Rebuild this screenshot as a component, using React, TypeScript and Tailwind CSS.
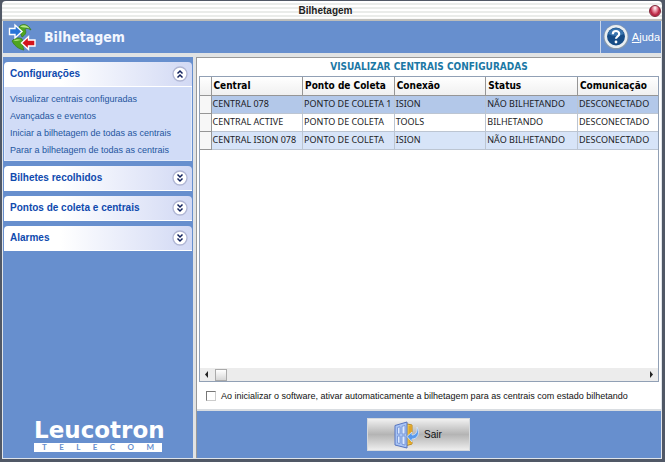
import { useState } from "react"

const TAHOMA = "font-['DejaVu_Sans_Condensed','DejaVu_Sans',sans-serif]"
const SANS = "font-['Liberation_Sans',sans-serif]"

const COLUMNS = ["Central", "Ponto de Coleta", "Conexão", "Status", "Comunicação"]

const ROWS = [
  ["CENTRAL 078", "PONTO DE COLETA 1", "ISION", "NÃO BILHETANDO", "DESCONECTADO"],
  ["CENTRAL ACTIVE", "PONTO DE COLETA", "TOOLS", "BILHETANDO", "DESCONECTADO"],
  ["CENTRAL ISION 078", "PONTO DE COLETA", "ISION", "NÃO BILHETANDO", "DESCONECTADO"],
]

const ROW_COLORS = ["bg-[#b3c8e9]", "bg-white", "bg-[#d7e4f8]"]

const GROUPS = [
  {
    title: "Configurações",
    links: [
      "Visualizar centrais configuradas",
      "Avançadas e eventos",
      "Iniciar a bilhetagem de todas as centrais",
      "Parar a bilhetagem de todas as centrais",
    ],
  },
  { title: "Bilhetes recolhidos", links: [] },
  { title: "Pontos de coleta e centrais", links: [] },
  { title: "Alarmes", links: [] },
]

function BilhetagemIcon() {
  return (
    <svg width="28" height="28" viewBox="0 0 28 28" aria-hidden="true">
      <path d="M11 4 C14 0 20 1 23 7 C20 5 18 5 17 6 C19 10 17 12 14 14 L12 9Z" fill="#4fa51f" stroke="#3a7d1c" strokeWidth=".8" />
      <path d="M12 3.500 C16 1 20 3 21.500 5.500 C18 4 15 5 12 3.500Z" fill="#b7e68a" />
      <path d="M4 18 C6 15 11 14 14 16 C16 19 14 24 16 27 C10 26 6 22 4 18Z" fill="#4fa51f" stroke="#3a7d1c" strokeWidth=".8" />
      <path d="M5.500 18 C8 16 11 16 13 17 C10 18 8 18 5.500 18Z" fill="#a3d873" />
      <path d="M1.500 5.500 H7 V2 L14 8.500 L7 15 V11.500 H1.500 V5.500Z" fill="#2774d8" stroke="#fff" strokeWidth="1.400" />
      <path d="M27 17 H20.500 V13.500 L13.500 20 L20.500 26.500 V23 H27Z" fill="#d3141c" stroke="#fff" strokeWidth="1.400" />
    </svg>
  )
}

function HelpIcon() {
  return (
    <svg width="26" height="26" viewBox="0 0 26 26" aria-hidden="true">
      <circle cx="13" cy="13" r="12.500" fill="#8698ac" />
      <circle cx="13" cy="12.500" r="11.500" fill="#e9eef2" />
      <circle cx="13" cy="12.500" r="9" fill="#174c86" />
      <path d="M5 10 A8.500 8.500 0 0 1 21 10 Q13 14 5 10Z" fill="#3974ae" />
      <path d="M9.800 10.200 C9.800 6 16.200 6 16.200 10 C16.200 12.300 13 12.300 13 14.800" fill="none" stroke="#fff" strokeWidth="2.200" />
      <circle cx="13" cy="18" r="1.400" fill="#fff" />
    </svg>
  )
}

function Chevron({ open }: { open: boolean }) {
  return (
    <svg width="16" height="16" viewBox="0 0 16 16" aria-hidden="true">
      <circle cx="8" cy="8" r="7" fill="#fff" stroke="#b0b6d4" strokeWidth="1.300" />
      <path
        d={open ? "M5.500 7.500 L8 5 L10.500 7.500 M5.500 11.500 L8 9 L10.500 11.500" : "M5.500 4.500 L8 7 L10.500 4.500 M5.500 8.500 L8 11 L10.500 8.500"}
        fill="none"
        stroke="#13235e"
        strokeWidth="1.500"
      />
    </svg>
  )
}

function DoorIcon() {
  return (
    <svg width="26" height="28" viewBox="0 0 26 28" aria-hidden="true">
      <path d="M11 2.500 L18 4 V23 L11 25Z" fill="#f6cc4a" stroke="#b98a22" />
      <path d="M14.500 5 L18 4 V23 L14.500 22Z" fill="#dfa52c" />
      <path d="M1 4.500 L13 1 V27 L1 24Z" fill="#a8c4f4" stroke="#5674c0" />
      <path d="M3.500 6.500 L6 5.800 V13 H3.500Z M8 5.300 L11 4.500 V13 H8Z M3.500 15 H6 V22.500 L3.500 22Z M8 15 H11 V24 L8 23.200Z" fill="#dceaff" stroke="#6b8ad0" strokeWidth=".8" />
      <path d="M23 6 C26.500 12 23.500 18 18 18 V21 L13 15.500 L18 11 V14 C22 14 23.500 11 23 6Z" fill="#5799ec" stroke="#d8eaff" strokeWidth=".8" />
    </svg>
  )
}

function TitleBar() {
  return (
    <div className="flex h-5 shrink-0 items-center rounded-t bg-[repeating-linear-gradient(to_bottom,#ffffff_0px,#ffffff_2px,#eaecea_2px,#eaecea_4px)] pr-px pb-px shadow-[inset_0_-2px_1px_#bdbdb9]">
      <h1 className={`${SANS} flex-1 text-center text-[10px] leading-4 font-bold text-[#222]`}>Bilhetagem</h1>
      <button
        aria-label="Fechar"
        className="size-3 rounded-full border border-[#80283a] bg-[radial-gradient(ellipse_at_50%_20%,#ffffff_0%,#e58295_35%,#b51d3c_65%,#ee9aa8_100%)]"
      />
    </div>
  )
}

function Header() {
  return (
    <header className="flex h-8 shrink-0 bg-[#678fce] text-white">
      <div className="flex flex-1 items-center gap-2 pl-[5px]">
        <BilhetagemIcon />
        <h2 className={`${TAHOMA} text-[14px] leading-5 font-bold text-[#f3f7ff]`}>Bilhetagem</h2>
      </div>
      <a
        href="#ajuda"
        className={`${SANS} flex items-center gap-[3px] border-l border-[#c9d6ec] pr-px pl-[2px] text-[11px] leading-4`}
      >
        <HelpIcon />
        <span>
          <u>A</u>juda
        </span>
      </a>
    </header>
  )
}

function Logo() {
  return (
    <div className="mt-auto mb-[6px] ml-[30px] flex w-32 flex-col gap-px self-start text-white">
      <div className="text-center font-['DejaVu_Sans',sans-serif] text-[23px] leading-6 font-bold">Leucotron</div>
      <div className="flex h-[9px] items-center justify-between bg-white px-2 font-['Lato',sans-serif] text-[8px] leading-[9px] font-bold text-[#678fce]">
        {"TELECOM".split("").map((letter, i) => (
          <span key={i}>{letter}</span>
        ))}
      </div>
    </div>
  )
}

function Sidebar() {
  const [open, setOpen] = useState("Configurações")

  return (
    <nav className={`${SANS} flex w-[190px] shrink-0 flex-col gap-[5px] bg-[#678fce] px-px pt-[5px]`}>
      {GROUPS.map((group) => {
        const isOpen = open === group.title && group.links.length > 0

        return (
          <section key={group.title}>
            <button
              onClick={() => setOpen(isOpen ? "" : group.title)}
              aria-expanded={isOpen}
              className="flex h-[25px] w-full items-center justify-between rounded-t border-b border-white bg-linear-to-r from-white from-30% to-[#d2d9f4] pr-1 pl-[6px] text-left text-[10px] leading-4 font-bold text-[#0f4aae]"
            >
              {group.title}
              <Chevron open={isOpen} />
            </button>
            {isOpen && (
              <ul className="border border-t-0 border-[#e4ebfa] bg-[#d1dcf7] pt-1 pb-px pl-[5px] text-[9px]">
                {group.links.map((link) => (
                  <li key={link} className="h-[17px] leading-[17px] whitespace-nowrap text-[#24569f]">
                    <a href="#centrais">{link}</a>
                  </li>
                ))}
              </ul>
            )}
          </section>
        )
      })}
      <Logo />
    </nav>
  )
}

function CentralsTable() {
  return (
    <div className="flex min-h-0 flex-1 flex-col border border-[#91a0b5] bg-white">
      <table className="w-full table-fixed border-collapse text-[#1c1c26]">
        <colgroup>
          <col className="w-[11px]" />
          <col className="w-[20%]" />
          <col className="w-[20%]" />
          <col className="w-[20%]" />
          <col className="w-[20%]" />
          <col />
        </colgroup>
        <thead className={`${TAHOMA} text-[10px]`}>
          <tr className="h-[18px] bg-linear-to-b from-white to-[#f0f0f0] text-black">
            <th className="border-r border-b border-[#969696]" />
            {COLUMNS.map((column) => (
              <th
                key={column}
                className="border-r border-b border-[#969696] px-[2px] py-0 text-left leading-4 font-bold whitespace-nowrap last:border-r-0"
              >
                {column}
              </th>
            ))}
          </tr>
        </thead>
        <tbody className="font-['Noto_Sans',sans-serif] text-[9px]">
          {ROWS.map((row, i) => (
            <tr key={row[0]} className={`h-[18px] ${ROW_COLORS[i]}`}>
              <td className="border-r border-b border-[#969696] bg-[#f7f7f7]" />
              {row.map((cell, j) => (
                <td
                  key={j}
                  className="border-r border-b border-[#bcc5d2] px-px py-0 leading-4 whitespace-nowrap last:border-r-0"
                >
                  {cell}
                </td>
              ))}
            </tr>
          ))}
        </tbody>
      </table>
      <div className="mt-auto flex h-[13px] items-center bg-[#ececec] px-1">
        <svg width="5" height="7" viewBox="0 0 5 7" aria-hidden="true">
          <path d="M4 0 L1 3.500 L4 7Z" fill="#222" />
        </svg>
        <div className="ml-[6px] h-3 w-3 border border-[#aaa] bg-linear-to-b from-white to-[#d7d7d7]" />
        <svg className="ml-auto" width="5" height="7" viewBox="0 0 5 7" aria-hidden="true">
          <path d="M1 0 L4 3.500 L1 7Z" fill="#222" />
        </svg>
      </div>
    </div>
  )
}

export default function App() {
  return (
    <div className="flex h-screen flex-col bg-[#505866] pt-px pr-[3px] pb-[3px] pl-[2px]">
      <TitleBar />
      <div className="flex min-h-0 flex-1 flex-col border border-t-0 border-[#dfe4ea] bg-[#e1e3e4]">
        <Header />
        <div className="flex min-h-0 flex-1 gap-[3px] pt-1">
          <Sidebar />
          <main className="flex min-w-0 flex-1 flex-col border-l border-[#999] bg-[#678fce]">
            <section className="flex min-h-0 flex-1 flex-col border-t border-[#999] bg-white px-[2px]">
              <h3 className={`${TAHOMA} text-center text-[10px] leading-[18px] font-bold text-[#1b78a5]`}>
                VISUALIZAR CENTRAIS CONFIGURADAS
              </h3>
              <CentralsTable />
              <label
                className={`${SANS} flex h-[27px] items-center gap-[5px] pl-[7px] text-[9px] leading-4 whitespace-nowrap text-[#111]`}
              >
                <input
                  type="checkbox"
                  className="size-[10px] shrink-0 appearance-none border border-[#ccc] border-t-[#777] border-l-[#777] bg-white checked:bg-[#678fce]"
                />
                Ao inicializar o software, ativar automaticamente a bilhetagem para as centrais com estado bilhetando
              </label>
            </section>
            <footer className="flex h-[49px] shrink-0 items-center justify-center border-t-2 border-[#d9dde1] bg-[#678fce] pr-[22px]">
              <button
                className={`${SANS} flex h-[33px] w-[103px] items-center justify-center gap-1 border border-[#d5d9dd] bg-linear-to-b from-[#f1f1f1] via-[#b4b4b4] via-50% to-[#eeeeee] text-[10px] leading-4 text-[#111]`}
              >
                <DoorIcon />
                Sair
              </button>
            </footer>
          </main>
        </div>
      </div>
    </div>
  )
}
